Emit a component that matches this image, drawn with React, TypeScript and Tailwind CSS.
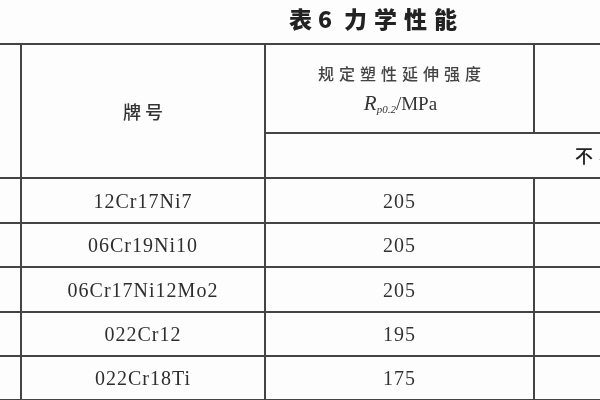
import React from "react";

const rows: [string, string][] = [
  ["12Cr17Ni7", "205"],
  ["06Cr19Ni10", "205"],
  ["06Cr17Ni12Mo2", "205"],
  ["022Cr12", "195"],
  ["022Cr18Ti", "175"],
];

const serif = { fontFamily: '"Liberation Serif", "Noto Sans CJK SC", serif' };
const cjk = { fontFamily: '"Noto Sans CJK SC", "Noto Sans", sans-serif' };

export default function App() {
  return (
    <div className="w-[600px] h-[400px] overflow-hidden bg-[#fdfdfd] text-[#3a3a3a] blur-[0.3px]">
      <div className="h-[43px] pl-[289px] pt-[3px] flex items-start">
        <span
          className="text-[23px] font-black text-[#222] tracking-[6px] leading-[30px]"
          style={cjk}
        >
          表6
        </span>
        <span
          className="ml-[6px] text-[23px] font-black text-[#222] tracking-[7px] leading-[30px]"
          style={cjk}
        >
          力学性能
        </span>
      </div>
      <div className="w-[835px] grid grid-cols-[22px_244px_269px_300px] grid-rows-[89px_45px_45px_44px_45px_44px_44px] border-t-2 border-[#444]">
        <div className="row-span-2 border-r-2 border-b-2 border-[#444]" />
        <div className="row-span-2 border-r-2 border-b-2 border-[#444] flex items-center justify-center">
          <span className="text-[18px] font-medium tracking-[4px] pl-[4px] text-[#333]" style={cjk}>
            牌号
          </span>
        </div>
        <div className="border-r-2 border-b-2 border-[#444] flex flex-col items-center justify-center gap-[8px]">
          <span className="text-[16px] font-medium tracking-[5px] pl-[5px] leading-[22px] text-[#444]" style={cjk}>
            规定塑性延伸强度
          </span>
          <span className="text-[19px] leading-[22px] text-[#333] pl-[2px]" style={serif}>
            <i className="text-[21px]">R</i>
            <sub className="text-[11px] italic">p0.2</sub>
            /MPa
          </span>
        </div>
        <div className="border-b-2 border-[#444]" />
        <div className="col-span-2 border-b-2 border-[#444] flex items-center pl-[309px]">
          <span className="text-[18px] font-medium tracking-[6px] text-[#222]" style={cjk}>
            不小于
          </span>
        </div>
        {rows.map(([name, val]) => (
          <React.Fragment key={name}>
            <div className="border-r-2 border-b-2 border-[#444]" />
            <div className="border-r-2 border-b-2 border-[#444] flex items-center justify-center">
              <span className="text-[20px] tracking-[1px] text-[#2e2e2e]" style={serif}>
                {name}
              </span>
            </div>
            <div className="border-r-2 border-b-2 border-[#444] flex items-center justify-center">
              <span className="text-[20px] tracking-[1px] text-[#333]" style={serif}>
                {val}
              </span>
            </div>
            <div className="border-b-2 border-[#444]" />
          </React.Fragment>
        ))}
      </div>
    </div>
  );
}
